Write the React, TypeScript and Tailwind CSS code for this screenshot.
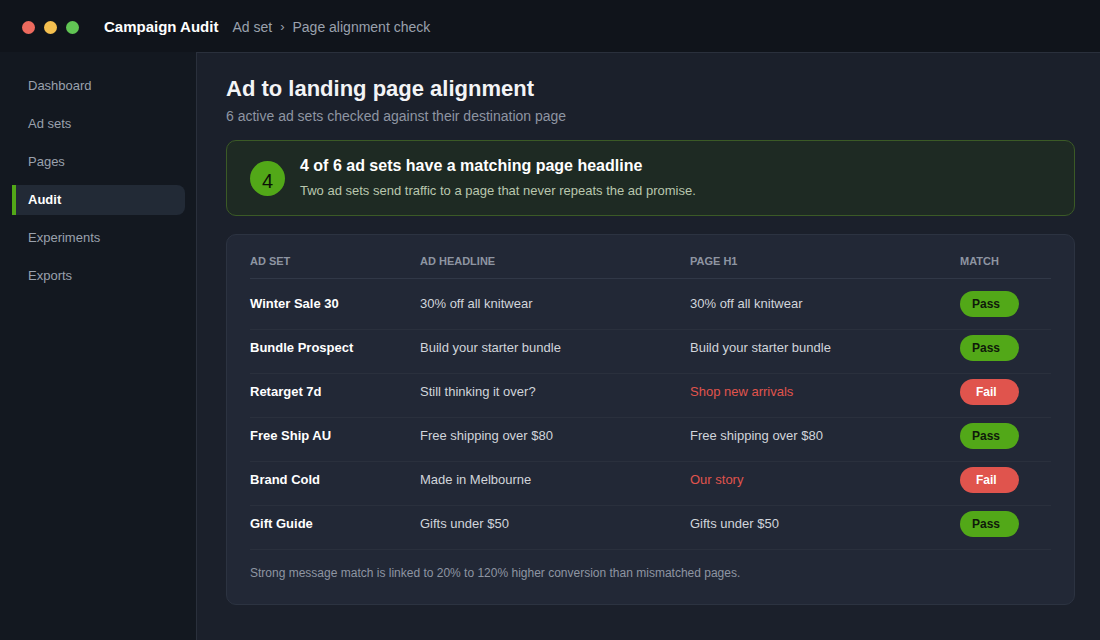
import React from "react";

type Row = {
  name: string;
  ad: string;
  page: string;
  pass: boolean;
};

const rows: Row[] = [
  { name: "Winter Sale 30", ad: "30% off all knitwear", page: "30% off all knitwear", pass: true },
  { name: "Bundle Prospect", ad: "Build your starter bundle", page: "Build your starter bundle", pass: true },
  { name: "Retarget 7d", ad: "Still thinking it over?", page: "Shop new arrivals", pass: false },
  { name: "Free Ship AU", ad: "Free shipping over $80", page: "Free shipping over $80", pass: true },
  { name: "Brand Cold", ad: "Made in Melbourne", page: "Our story", pass: false },
  { name: "Gift Guide", ad: "Gifts under $50", page: "Gifts under $50", pass: true },
];

const nav = ["Dashboard", "Ad sets", "Pages", "Audit", "Experiments", "Exports"];

export default function App() {
  return (
    <div className="flex h-[640px] w-[1100px] flex-col overflow-hidden bg-[#1b202b] font-['Liberation_Sans',Arial,sans-serif] text-[#e5e7eb]">
      {/* Title bar */}
      <header className="flex h-[52px] shrink-0 items-center bg-[#10141b] pl-[22px] pt-[2px]">
        <div className="flex items-center gap-[9px]">
          <span className="h-[13px] w-[13px] rounded-full bg-[#ed6a5e]" />
          <span className="h-[13px] w-[13px] rounded-full bg-[#f4bf4f]" />
          <span className="h-[13px] w-[13px] rounded-full bg-[#61c554]" />
        </div>
        <span className="ml-[25px] text-[15px] font-bold text-white">Campaign Audit</span>
        <span className="ml-[14px] text-[14px] text-[#9aa1ad]">Ad set</span>
        <span className="mx-[8px] text-[13px] text-[#9aa1ad]">›</span>
        <span className="text-[14px] text-[#9aa1ad]">Page alignment check</span>
      </header>

      <div className="flex min-h-0 flex-1">
        {/* Sidebar */}
        <aside className="w-[197px] shrink-0 border-r border-[#2a303c] bg-[#131820] pl-[12px] pr-[11px] pt-[19px]">
          <nav className="flex flex-col gap-[8px]">
            {nav.map((item) =>
              item === "Audit" ? (
                <div
                  key={item}
                  className="flex h-[30px] items-center rounded-r-lg border-l-4 border-[#52a818] bg-[#222a36] pl-[12px] text-[13px] font-bold text-white"
                >
                  {item}
                </div>
              ) : (
                <div key={item} className="flex h-[30px] items-center pl-[16px] text-[13px] text-[#9aa1ad]">
                  {item}
                </div>
              )
            )}
          </nav>
        </aside>

        {/* Main */}
        <main className="flex-1 border-t border-[#2a303c] pl-[29px] pr-[25px] pt-[21px]">
          <h1 className="text-[22px] font-bold leading-[30px] text-[#f3f4f6]">Ad to landing page alignment</h1>
          <p className="mt-[2px] text-[14px] text-[#8e95a2]">
            6 active ad sets checked against their destination page
          </p>

          {/* Summary */}
          <section className="mt-[13px] flex h-[76px] items-center gap-[15px] rounded-[10px] border border-[#3b5a26] bg-[#1e2a23] pl-[23px]">
            <div className="flex h-[35px] w-[35px] items-center justify-center rounded-full bg-[#52a818] pt-[5px] text-[20px] text-[#0b1207]">
              4
            </div>
            <div className="-mt-[1px]">
              <p className="text-[16px] font-bold text-white">4 of 6 ad sets have a matching page headline</p>
              <p className="mt-[3px] text-[13px] text-[#b9c7ae]">
                Two ad sets send traffic to a page that never repeats the ad promise.
              </p>
            </div>
          </section>

          {/* Table */}
          <section className="mt-[18px] rounded-[10px] border border-[#2c3341] bg-[#222836] px-[23px] pb-[23px]">
            <div className="grid h-[44px] grid-cols-[170px_270px_270px_1fr] items-start border-b border-[#313847] pt-[20px] text-[11px] font-bold leading-[13px] text-[#8e95a2]">
              <span>AD SET</span>
              <span>AD HEADLINE</span>
              <span>PAGE H1</span>
              <span>MATCH</span>
            </div>
            {rows.map((r, i) => (
              <div
                key={r.name}
                className={`grid grid-cols-[170px_270px_270px_1fr] items-start border-b border-[#2a303d] text-[13px] leading-[16px] ${
                  i === 0 ? "h-[51px] pt-[17px]" : "h-[44px] pt-[10px]"
                }`}
              >
                <span className="font-bold text-white">{r.name}</span>
                <span className="text-[#d1d5db]">{r.ad}</span>
                <span className={r.pass ? "text-[#d1d5db]" : "text-[#e0544d]"}>{r.page}</span>
                <span className="-mt-[5px]">
                  <span
                    className={
                      r.pass
                        ? "inline-flex h-[26px] w-[59px] items-center rounded-full bg-[#52a818] pl-[12px] text-[12px] font-bold text-[#0f1a0a]"
                        : "inline-flex h-[26px] w-[59px] items-center rounded-full bg-[#e0544d] pl-[16px] text-[12px] font-bold text-white"
                    }
                  >
                    {r.pass ? "Pass" : "Fail"}
                  </span>
                </span>
              </div>
            ))}
            <p className="mt-[15px] text-[12px] leading-[16px] text-[#8e95a2]">
              Strong message match is linked to 20% to 120% higher conversion than mismatched pages.
            </p>
          </section>
        </main>
      </div>
    </div>
  );
}
